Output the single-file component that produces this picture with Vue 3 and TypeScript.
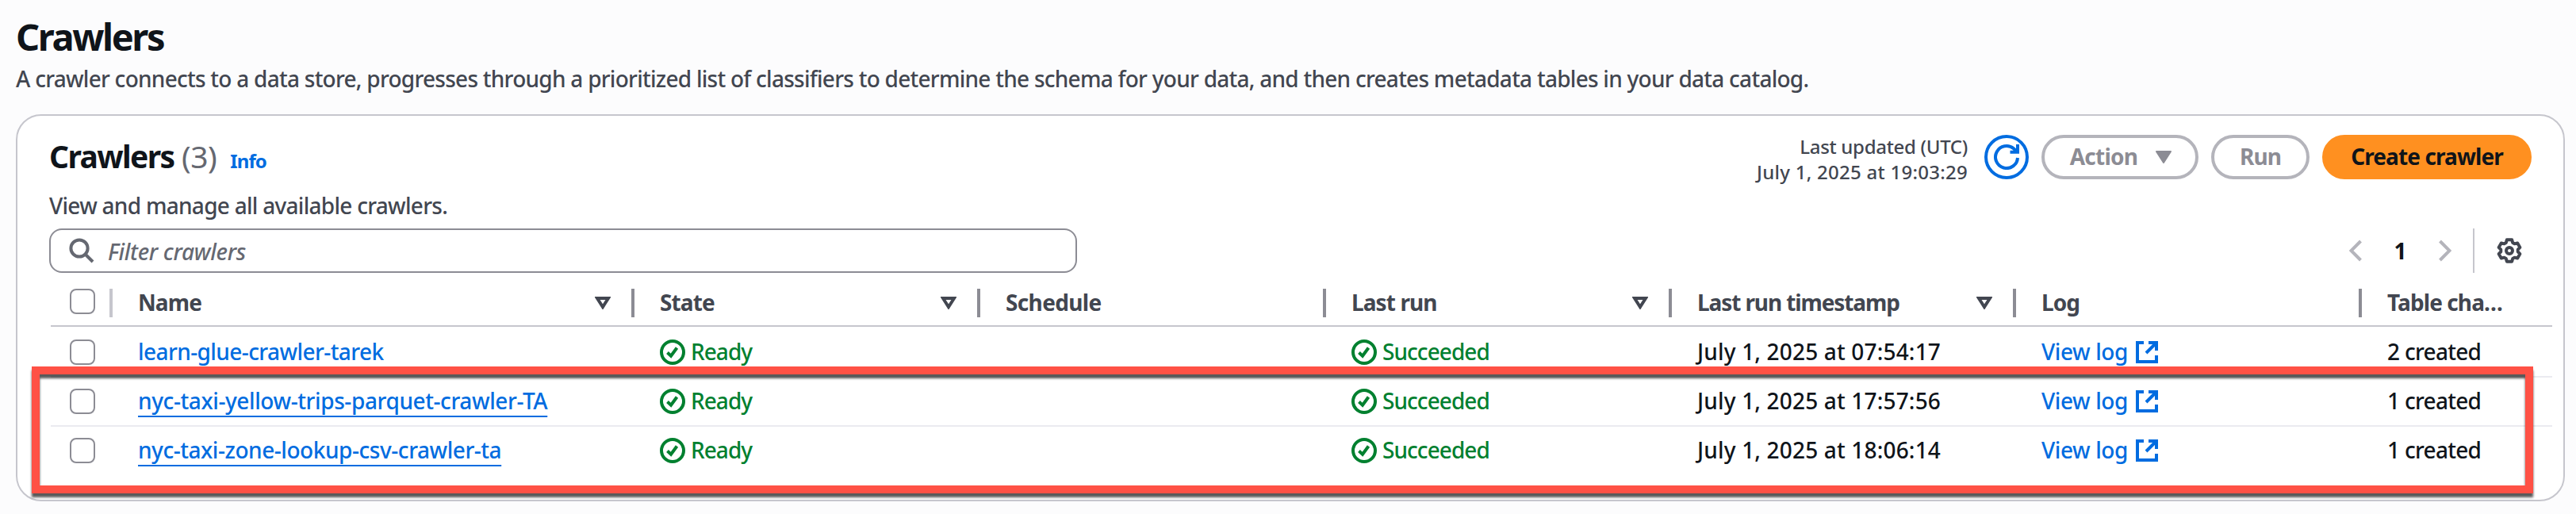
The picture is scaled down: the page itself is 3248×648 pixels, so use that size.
<script setup lang="ts">
interface Column {
  key: string
  label: string
  sortable: boolean
}
interface Crawler {
  name: string
  state: string
  lastRun: string
  timestamp: string
  changes: string
}

const columns: Column[] = [
  { key: 'name', label: 'Name', sortable: true },
  { key: 'state', label: 'State', sortable: true },
  { key: 'schedule', label: 'Schedule', sortable: false },
  { key: 'lastRun', label: 'Last run', sortable: true },
  { key: 'timestamp', label: 'Last run timestamp', sortable: true },
  { key: 'log', label: 'Log', sortable: false },
  { key: 'changes', label: 'Table cha…', sortable: false },
]

const crawlers: Crawler[] = [
  { name: 'learn-glue-crawler-tarek', state: 'Ready', lastRun: 'Succeeded', timestamp: 'July 1, 2025 at 07:54:17', changes: '2 created' },
  { name: 'nyc-taxi-yellow-trips-parquet-crawler-TA', state: 'Ready', lastRun: 'Succeeded', timestamp: 'July 1, 2025 at 17:57:56', changes: '1 created' },
  { name: 'nyc-taxi-zone-lookup-csv-crawler-ta', state: 'Ready', lastRun: 'Succeeded', timestamp: 'July 1, 2025 at 18:06:14', changes: '1 created' },
]

// Outline of a six-toothed gear centred in a 32-unit box
const polar = (radius: number, degrees: number): string => {
  const a = (degrees * Math.PI) / 180
  return `${(16 + radius * Math.sin(a)).toFixed(2)} ${(16 - radius * Math.cos(a)).toFixed(2)}`
}
const gearPath =
  'M' +
  [0, 60, 120, 180, 240, 300]
    .flatMap((t) => [polar(10.8, t - 23), polar(14, t - 13), polar(14, t + 13), polar(10.8, t + 23)])
    .join('L') +
  'Z'
</script>

<template>
  <main class="page">
    <h1 class="page-title">Crawlers</h1>
    <p class="page-description">A crawler connects to a data store, progresses through a prioritized list of classifiers to determine the schema for your data, and then creates metadata tables in your data catalog.</p>

    <section class="card">
      <header class="card-header">
        <h2 class="card-title">Crawlers <span class="counter">(3)</span></h2>
        <a class="info">Info</a>
        <div class="actions">
          <div class="updated">
            <span class="updated-label">Last updated (UTC)</span>
            <span class="updated-time">July 1, 2025 at 19:03:29</span>
          </div>
          <button class="refresh" aria-label="Refresh">
            <svg viewBox="0 0 32 32"><path d="M30 17a14 14 0 1 1-5-11.7l4 4.2" /><path d="M30 0v9.8H20.5" /></svg>
          </button>
          <button class="btn btn-action">
            <span>Action</span>
            <svg class="caret" viewBox="0 0 20 16"><path d="M1 1h18l-9 14z" /></svg>
          </button>
          <button class="btn btn-run"><span>Run</span></button>
          <button class="btn btn-primary"><span>Create crawler</span></button>
        </div>
      </header>
      <p class="card-description">View and manage all available crawlers.</p>

      <div class="tools">
        <div class="filter">
          <svg viewBox="0 0 32 32"><circle cx="13" cy="13" r="10.6" /><path d="M20.5 20.5 30 30" /></svg>
          <span>Filter crawlers</span>
        </div>
        <nav class="pagination">
          <svg class="chevron" viewBox="0 0 16 28"><path d="M14.5 2 2.5 14l12 12" /></svg>
          <span class="page-number">1</span>
          <svg class="chevron" viewBox="0 0 16 28"><path d="M1.5 2l12 12-12 12" /></svg>
        </nav>
        <div class="preferences">
          <svg viewBox="0 0 32 32"><path :d="gearPath" /><circle cx="16" cy="16" r="4" /></svg>
        </div>
      </div>

      <div class="table">
        <div class="row head">
          <div class="cell select"><i class="checkbox"></i></div>
          <div v-for="col in columns" :key="col.key" class="cell" :class="col.key">
            <span class="text">{{ col.label }}</span>
            <svg v-if="col.sortable" class="sort" viewBox="0 0 20 16"><path d="M3 2h14l-7 11z" /></svg>
          </div>
        </div>
        <div v-for="c in crawlers" :key="c.name" class="row body">
          <div class="cell select"><i class="checkbox"></i></div>
          <div class="cell name"><a class="text link">{{ c.name }}</a></div>
          <div class="cell status">
            <svg viewBox="0 0 32 32"><circle cx="16" cy="16" r="14" /><path d="m9.5 16.5 4.5 4.3 7.5-10.3" /></svg>
            <span class="text">{{ c.state }}</span>
          </div>
          <div class="cell"></div>
          <div class="cell status">
            <svg viewBox="0 0 32 32"><circle cx="16" cy="16" r="14" /><path d="m9.5 16.5 4.5 4.3 7.5-10.3" /></svg>
            <span class="text">{{ c.lastRun }}</span>
          </div>
          <div class="cell timestamp"><span class="text">{{ c.timestamp }}</span></div>
          <div class="cell log">
            <span class="text">View log</span>
            <svg viewBox="0 0 32 32"><path d="M12 4H4v24h24v-8" /><path d="M18 4h10v10M27 5 15 17" /></svg>
          </div>
          <div class="cell changes"><span class="text">{{ c.changes }}</span></div>
        </div>
      </div>
    </section>

    <div class="highlight"></div>
  </main>
</template>

<style>
body {
  background: #fcfcfd;
}
</style>

<style scoped>
.page {
  position: relative;
  box-sizing: border-box;
  width: 3248px;
  height: 648px;
  padding: 16px 14px 16px 20px;
  overflow: hidden;
  background: #fcfcfd;
  font-family: "Noto Sans", "Open Sans", sans-serif;
  font-size: 28px;
  font-weight: 500;
  color: #0f141a;
  white-space: nowrap;
}
.page * {
  box-sizing: border-box;
}
h1,
h2,
p {
  margin: 0;
}
svg {
  display: block;
  flex: none;
  fill: none;
  stroke: currentColor;
  stroke-width: 4;
}
.page-title {
  height: 60px;
  font-size: 47px;
  line-height: 60px;
  font-weight: 700;
  letter-spacing: -2.4px;
}
.page-description {
  height: 68px;
  padding-top: 3px;
  line-height: 40px;
  letter-spacing: -0.74px;
  color: #424650;
}
.card {
  height: 488px;
  border: 2px solid #c6c6cd;
  border-radius: 32px;
  background: #fff;
}
.card-header {
  display: flex;
  height: 94px;
  padding: 24px 40px 0;
}
.card-title {
  height: 56px;
  font-size: 39px;
  line-height: 54px;
  font-weight: 700;
  letter-spacing: -1.6px;
}
.counter {
  margin-left: 1px;
  font-weight: 400;
  letter-spacing: -0.5px;
  color: #656871;
}
.info {
  margin-left: 17px;
  font-size: 24px;
  line-height: 66px;
  font-weight: 700;
  letter-spacing: -0.9px;
  color: #006ce0;
}
.actions {
  display: flex;
  height: 56px;
  margin-left: auto;
}
.updated {
  display: flex;
  flex-direction: column;
  align-items: flex-end;
  margin-right: 21px;
  font-size: 24px;
  line-height: 32px;
  color: #424650;
}
.updated-label {
  margin-top: -1px;
  letter-spacing: -0.3px;
}
.updated-time {
  letter-spacing: 0.26px;
}
button {
  display: flex;
  align-items: center;
  justify-content: center;
  height: 56px;
  padding: 0;
  border: 4px solid #b4b4bb;
  border-radius: 28px;
  background: #fff;
  font: inherit;
  font-weight: 700;
  line-height: 40px;
  color: #8c8c94;
}
.refresh {
  width: 56px;
  margin-right: 16px;
  border-color: #006ce0;
  color: #006ce0;
}
.refresh svg {
  width: 32px;
  height: 32px;
}
.btn span {
  margin-top: -2px;
}
.btn-action {
  width: 198px;
  margin-right: 16px;
  padding-left: 2px;
  letter-spacing: -0.75px;
}
.caret {
  width: 20px;
  height: 16px;
  margin-left: 23px;
  fill: currentColor;
  stroke-width: 2;
  stroke-linejoin: round;
}
.btn-run {
  width: 124px;
  margin-right: 16px;
  letter-spacing: -0.9px;
}
.btn-primary {
  width: 264px;
  border-color: #ff9020;
  background: #ff9020;
  letter-spacing: -0.9px;
  color: #0f141a;
}
.card-description {
  height: 48px;
  padding-left: 40px;
  line-height: 38px;
  letter-spacing: -0.72px;
  color: #424650;
}
.tools {
  display: flex;
  align-items: center;
  height: 56px;
  padding: 0 40px;
}
.filter {
  display: flex;
  align-items: center;
  width: 1296px;
  height: 56px;
  padding-left: 23px;
  border: 2px solid #8c8c94;
  border-radius: 16px;
  font-style: italic;
  font-weight: 500;
  letter-spacing: -0.3px;
  line-height: 40px;
  color: #656871;
}
.filter svg {
  width: 32px;
  height: 32px;
  margin-right: 17px;
}
.filter span {
  padding-top: 1px;
}
.pagination {
  display: flex;
  align-items: center;
  margin-left: auto;
  color: #b4b4bb;
}
.chevron {
  width: 16px;
  height: 28px;
}
.page-number {
  width: 97px;
  margin-top: -1px;
  text-align: center;
  font-weight: 700;
  line-height: 40px;
  color: #0f141a;
}
.preferences {
  display: flex;
  align-items: center;
  height: 56px;
  margin-left: 27px;
  padding: 0 12px 0 28px;
  border-left: 2px solid #c6c6cd;
  color: #424650;
}
.preferences svg {
  width: 32px;
  height: 32px;
  stroke-linejoin: round;
}
.table {
  margin: 0 14px 0 42px;
}
.row {
  display: grid;
  grid-template-columns: 78px 658px 436px 436px 436px 434px 436px 1fr;
  height: 62px;
  border-bottom: 2px solid #ebebf0;
}
.row:last-child {
  border-bottom-color: transparent;
}
.head {
  height: 68px;
  padding-top: 8px;
  border-bottom-color: #c6c6cd;
}
.head + .body {
  height: 64px;
  padding-top: 2px;
}
.cell {
  position: relative;
  display: flex;
  align-items: center;
  padding-left: 32px;
}
.select {
  padding-left: 24px;
}
.checkbox {
  width: 32px;
  height: 32px;
  border: 2px solid #8c8c94;
  border-radius: 8px;
}
.text {
  padding-bottom: 2px;
  line-height: 40px;
}
.head .text {
  padding-bottom: 0;
}
.head .cell {
  padding-right: 30px;
  font-weight: 700;
  letter-spacing: -0.9px;
  color: #424650;
}
.head .cell:not(:last-child)::after {
  content: "";
  position: absolute;
  right: 0;
  top: 12px;
  width: 4px;
  height: 36px;
  background: #8c8c94;
}
.head .select {
  padding: 0 0 2px 24px;
}
.head .select:not(:last-child)::after {
  background: #c6c6cd;
}
.head .schedule {
  letter-spacing: -0.65px;
}
.head .timestamp {
  letter-spacing: -1.1px;
}
.sort {
  width: 20px;
  height: 16px;
  margin-top: 2px;
  margin-left: auto;
}
.link {
  letter-spacing: -0.4px;
  color: #006ce0;
  text-decoration: underline;
  text-decoration-thickness: 2px;
  text-underline-offset: 8px;
}
.body:last-child .link {
  letter-spacing: -0.45px;
}
.head + .body .link {
  letter-spacing: -0.58px;
  text-decoration: none;
}
.status {
  color: #00802f;
  letter-spacing: -0.95px;
}
.status svg {
  width: 32px;
  height: 32px;
  margin-right: 7px;
}
.body .timestamp {
  letter-spacing: 0.17px;
}
.body .log {
  color: #006ce0;
  letter-spacing: -0.4px;
}
.log svg {
  width: 32px;
  height: 32px;
  margin-left: 8px;
}
.body .changes {
  letter-spacing: -0.7px;
}
.highlight {
  position: absolute;
  left: 40px;
  top: 462px;
  width: 3154px;
  height: 160px;
  border: 10px solid #ff5145;
  filter: drop-shadow(0 5px 1.5px rgba(0, 0, 0, 0.65));
}
</style>
